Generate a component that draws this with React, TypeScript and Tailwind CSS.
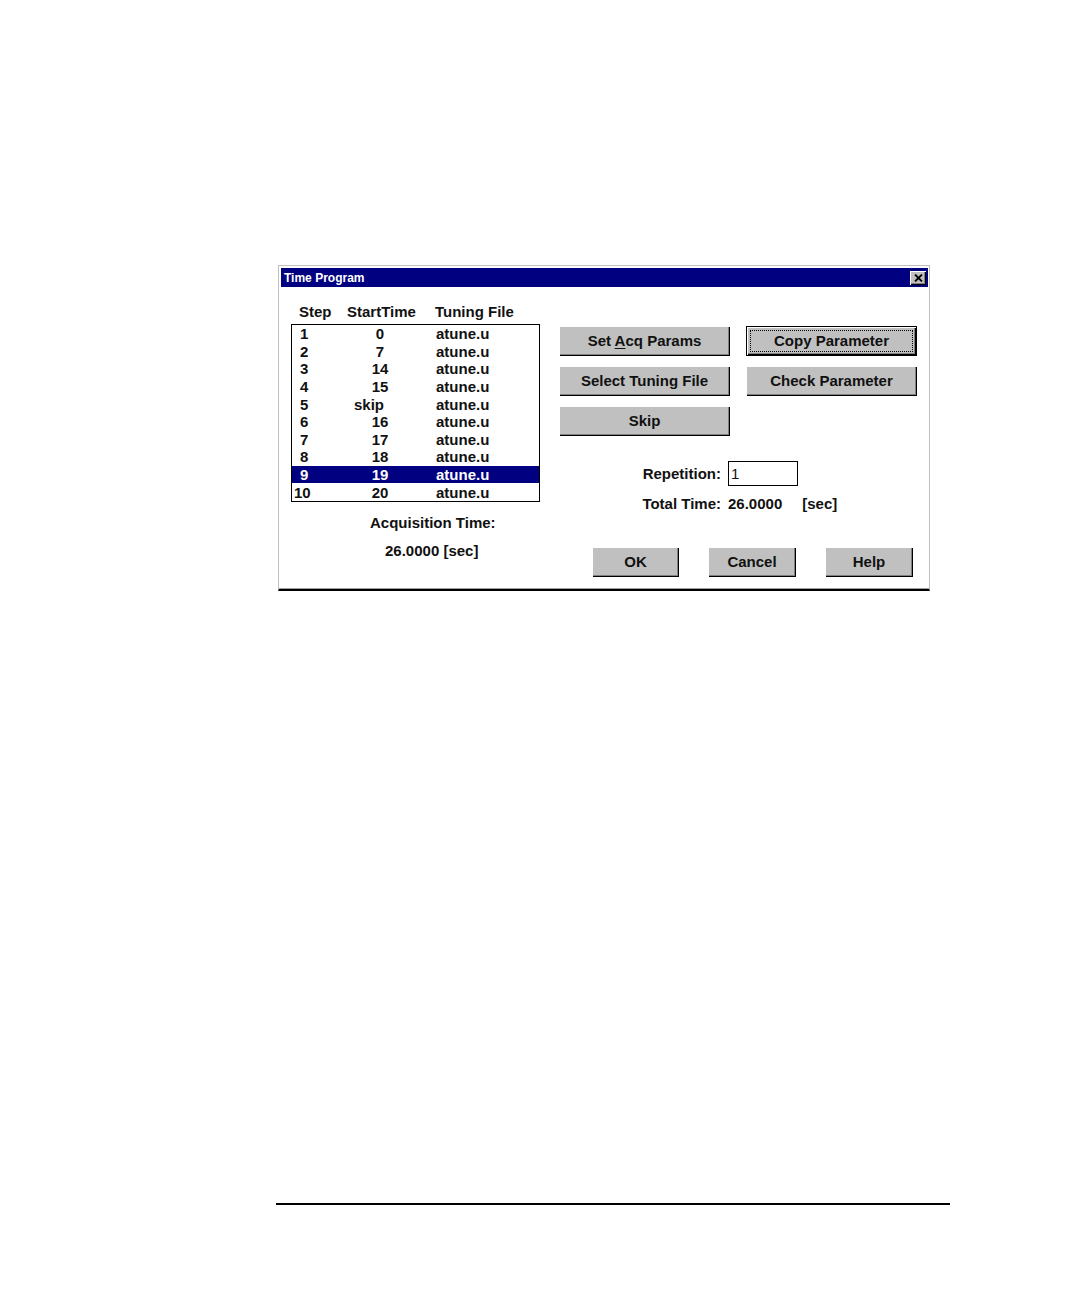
import type { ReactElement, ReactNode } from "react";

// Time Program dialog — Win95-style bevels on a white page.

const rows: { step: string; time: string; file: string }[] = [
  { step: "1", time: "0", file: "atune.u" },
  { step: "2", time: "7", file: "atune.u" },
  { step: "3", time: "14", file: "atune.u" },
  { step: "4", time: "15", file: "atune.u" },
  { step: "5", time: "skip", file: "atune.u" },
  { step: "6", time: "16", file: "atune.u" },
  { step: "7", time: "17", file: "atune.u" },
  { step: "8", time: "18", file: "atune.u" },
  { step: "9", time: "19", file: "atune.u" },
  { step: "10", time: "20", file: "atune.u" },
];

const SELECTED = "9";

function WinButton({
  children,
  width,
  isDefault = false,
}: {
  children: ReactNode;
  width: string;
  isDefault?: boolean;
}): ReactElement {
  if (isDefault) {
    return (
      <button
        type="button"
        className={`${width} flex h-[30px] border border-black bg-[#c0c0c0] p-[3px] shadow-[inset_1px_1px_0_#fff,inset_-1px_-1px_0_#000,inset_-2px_-2px_0_#808080]`}
      >
        <span className="flex h-full flex-1 items-center justify-center border border-dotted border-black pb-[1px] text-[15px] font-bold leading-none text-[#111]">
          <span>{children}</span>
        </span>
      </button>
    );
  }
  return (
    <button
      type="button"
      className={`${width} flex h-[30px] items-center justify-center bg-[#c0c0c0] pb-[1px] text-[15px] font-bold leading-none text-[#111] shadow-[inset_1px_1px_0_#fff,inset_-1px_-1px_0_#000,inset_-2px_-2px_0_#808080]`}
    >
      <span>{children}</span>
    </button>
  );
}

function TitleBar(): ReactElement {
  return (
    <div className="ml-[2px] mr-[1px] flex h-[19px] items-center justify-between bg-[#000080] pl-[3px] pr-[2px]">
      <span className="text-[12px] font-bold leading-none text-white">Time Program</span>
      <span className="flex h-[14px] w-[16px] items-center justify-center bg-[#c0c0c0] shadow-[inset_1px_1px_0_#fff,inset_-1px_-1px_0_#000,inset_-2px_-2px_0_#808080]">
        <svg width="9" height="8" viewBox="0 0 9 8" aria-hidden>
          <path d="M1 0.5 L8 7.5 M8 0.5 L1 7.5" stroke="#000" strokeWidth="1.8" />
        </svg>
      </span>
    </div>
  );
}

function StepList(): ReactElement {
  return (
    <div className="flex flex-col">
      <div className="flex h-[18px] items-center pl-[8px] text-[15px] font-bold leading-none text-[#111]">
        <span className="w-[48px]">Step</span>
        <span className="w-[88px]">StartTime</span>
        <span>Tuning File</span>
      </div>
      <div className="mt-[4px] border border-black bg-white">
        {rows.map((row) => {
          const selected = row.step === SELECTED;
          return (
            <div
              key={row.step}
              className={`flex h-[17.6px] items-center text-[15px] font-bold leading-none ${
                selected ? "bg-[#000080] text-white" : "text-[#111]"
              }`}
            >
              <span className={`w-[60px] ${row.step === "10" ? "pl-[2px]" : "pl-[8px]"}`}>
                {row.step}
              </span>
              <span className={`w-[56px] text-center ${row.time === "skip" ? "pr-[22px]" : ""}`}>
                {row.time}
              </span>
              <span className="ml-[28px]">{row.file}</span>
            </div>
          );
        })}
      </div>
      <p className="mt-[12px] h-[18px] pl-[79px] text-[15px] font-bold leading-[18px] text-[#111]">
        Acquisition Time:
      </p>
      <p className="mt-[10px] h-[18px] pl-[94px] text-[15px] font-bold leading-[18px] text-[#111]">
        26.0000 [sec]
      </p>
    </div>
  );
}

function Controls(): ReactElement {
  return (
    <div className="flex flex-col pt-[39px]">
      <div className="grid grid-cols-[171px_171px] gap-x-[16px] gap-y-[10px]">
        <WinButton width="w-[171px]">
          Set <span className="underline underline-offset-2">A</span>cq Params
        </WinButton>
        <WinButton width="w-[171px]" isDefault>
          Copy Parameter
        </WinButton>
        <WinButton width="w-[171px]">Select Tuning File</WinButton>
        <WinButton width="w-[171px]">Check Parameter</WinButton>
        <WinButton width="w-[171px]">Skip</WinButton>
      </div>

      <div className="mt-[25px] flex items-center text-[15px] font-bold leading-none text-[#111]">
        <span className="w-[162px] text-right">Repetition:</span>
        <span className="ml-[7px] flex h-[25px] w-[70px] items-center border border-black pl-[2px] font-normal">
          1
        </span>
      </div>

      <div className="mt-[8px] flex h-[18px] items-center text-[15px] font-bold leading-none text-[#111]">
        <span className="w-[162px] text-right">Total Time:</span>
        <span className="ml-[7px]">26.0000</span>
        <span className="ml-[20px]">[sec]</span>
      </div>

      <div className="mt-[35px] flex">
        <span className="ml-[33px]">
          <WinButton width="w-[87px]">OK</WinButton>
        </span>
        <span className="ml-[29px]">
          <WinButton width="w-[88px]">Cancel</WinButton>
        </span>
        <span className="ml-[29px]">
          <WinButton width="w-[88px]">Help</WinButton>
        </span>
      </div>
    </div>
  );
}

export default function App(): ReactElement {
  return (
    <div className="min-h-[1298px] bg-white pl-[276px] pt-[265px] font-['Liberation_Sans',Arial,sans-serif]">
      <div className="ml-[2px] w-[652px] border-x border-t border-x-[#c0c0c0] border-t-[#c0c0c0] border-b-2 border-b-black">
        <div className="border-b border-b-[#a0a0a0] pb-[11px] pt-[2px]">
          <TitleBar />
          <div className="flex">
            <div className="ml-[12px] w-[249px]">
              <div className="pt-[15px]">
                <StepList />
              </div>
            </div>
            <div className="ml-[19px]">
              <Controls />
            </div>
          </div>
        </div>
      </div>
      <div className="mt-[612px] h-[2px] w-[674px] bg-black" />
    </div>
  );
}
